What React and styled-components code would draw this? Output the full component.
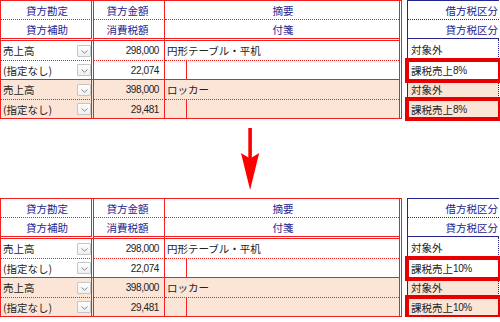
import React from 'react';
import styled, { createGlobalStyle, css } from 'styled-components';

const RED = '#f42020';
const NAVY = '#25258f';
const BEIGE = '#fbe5d6';
const FLAG = '#e80000';

const Global = createGlobalStyle`
  html, body { margin: 0; padding: 0; background: #fff; overflow: hidden; }
  body {
    font-family: "Noto Sans CJK JP", "Noto Sans", sans-serif;
    font-size: 10.5px;
    color: #222;
  }
  * { box-sizing: border-box; }
`;

const Page = styled.div`
  width: 500px;
  display: flex;
  flex-direction: column;
`;

const Section = styled.section`
  display: flex;
  align-items: flex-start;
  gap: 5px;
`;

const ArrowRow = styled.div`
  height: 79px;
  display: flex;
  justify-content: center;
`;

/* ---------- red (journal) table ---------- */

const RedTable = styled.div`
  width: 402px;
  display: grid;
  grid-template-columns: 93px 71px 1fr;
  border-top: 1px solid ${RED};
  border-left: 1px solid ${RED};
  border-bottom: 1px solid ${RED};
  border-right: 3px double ${RED};
`;

const rowKinds = {
  ha: css`height: 19px; border-bottom: 1px dotted ${RED};`,
  hb: css`height: 21px; border-bottom: 3px double ${RED};`,
  da: css`height: 20px; border-bottom: 1px dotted ${RED};`,
  db: css`height: 19px; border-bottom: 1px solid ${RED};`,
  last: css`height: 18px;`,
};

const colKinds = {
  1: css`border-right: 3px double ${RED}; padding: 0 0 0 2px;`,
  2: css`border-right: 1px solid ${RED}; padding: 0 5px 0 2px;`,
  3: css`padding: 0 0 0 2px;`,
};

const Cell = styled.div`
  display: flex;
  align-items: center;
  justify-content: ${(p) => (p.$align === 'center' ? 'center' : p.$align === 'right' ? 'flex-end' : 'space-between')};
  background: ${(p) => p.$bg || '#fff'};
  color: ${(p) => (p.$head ? NAVY : '#222')};
  white-space: nowrap;
  overflow: hidden;
  ${(p) => rowKinds[p.$row]}
  ${(p) => colKinds[p.$col]}
  ${(p) => p.$split && css`padding: 0; justify-content: flex-start; align-items: stretch;`}
`;

const Num = styled.span`
  font-family: "Liberation Sans", Arial, sans-serif;
  font-size: 10px;
  letter-spacing: -0.4px;
`;

const Picker = styled.span`
  flex: none;
  width: 14px;
  height: 12px;
  margin-right: 0;
  border: 1px solid #c6c6c6;
  border-radius: 1px;
  background: linear-gradient(#ffffff, #efefef);
  display: flex;
  align-items: flex-end;
  justify-content: center;
  padding-bottom: 2px;
`;

const Tag = styled.span`
  width: 22px;
  flex: none;
  border-right: 1px solid ${RED};
`;

/* ---------- blue (tax) table ---------- */

const BlueTable = styled.div`
  width: 92px;
  display: flex;
  flex-direction: column;
  border-top: 1px solid ${NAVY};
  border-left: 1px solid ${NAVY};
  border-bottom: 1px solid ${NAVY};
`;

const blueKinds = {
  ha: css`height: 19px; border-bottom: 1px dotted ${NAVY};`,
  hb: css`height: 19px; border-bottom: 1px solid ${NAVY};`,
  da: css`height: 22px; border-bottom: 1px dotted ${NAVY};`,
  db: css`height: 19px; border-bottom: 1px solid ${NAVY};`,
  ga: css`height: 20px; border-bottom: 1px dotted ${NAVY};`,
  last: css`height: 18px;`,
};

const TaxHead = styled.div`
  display: flex;
  align-items: center;
  justify-content: flex-end;
  padding-right: 1px;
  color: ${NAVY};
  white-space: nowrap;
  ${(p) => blueKinds[p.$row]}
`;

const TaxCell = styled.div`
  width: 91px;
  display: flex;
  align-items: center;
  padding-left: 3px;
  background: ${(p) => p.$bg || '#fff'};
  border-right: 1px dotted ${NAVY};
  white-space: nowrap;
  ${(p) => blueKinds[p.$row]}
  ${(p) =>
    p.$flag &&
    css`
      position: relative;
      z-index: 1;
      outline: 4px solid ${FLAG};
      outline-offset: -1px;
    `}
`;

/* ---------- parts ---------- */

const Chevron = () => (
  <svg width="7" height="4" viewBox="0 0 7 4">
    <path d="M0.5 0.5 L3.5 3.2 L6.5 0.5" stroke="#8a8a8a" strokeWidth="1" fill="none" />
  </svg>
);

const DownArrow = () => (
  <svg width="20" height="79" viewBox="0 0 20 79">
    <rect x="8.3" y="9" width="3.6" height="32" fill="#f00" />
    <path d="M1 34 L10.1 39.5 L19.2 34 L10.1 71 Z" fill="#f00" />
  </svg>
);

const entries = [
  { acct: '売上高', sub: '(指定なし)', amt: '298,000', tax: '22,074', memo: '円形テーブル・平机', bg: '#fff' },
  { acct: '売上高', sub: '(指定なし)', amt: '398,000', tax: '29,481', memo: 'ロッカー', bg: BEIGE },
];

function Journal() {
  return (
    <RedTable>
      <Cell $row="ha" $col={1} $align="center" $head>貸方勘定</Cell>
      <Cell $row="ha" $col={2} $align="center" $head>貸方金額</Cell>
      <Cell $row="ha" $col={3} $align="center" $head>摘要</Cell>
      <Cell $row="hb" $col={1} $align="center" $head>貸方補助</Cell>
      <Cell $row="hb" $col={2} $align="center" $head>消費税額</Cell>
      <Cell $row="hb" $col={3} $align="center" $head>付箋</Cell>
      {entries.map((e, i) => {
        const last = i === entries.length - 1;
        return (
          <React.Fragment key={i}>
            <Cell $row="da" $col={1} $bg={e.bg}>
              <span>{e.acct}</span>
              <Picker><Chevron /></Picker>
            </Cell>
            <Cell $row="da" $col={2} $align="right" $bg={e.bg}><Num>{e.amt}</Num></Cell>
            <Cell $row="da" $col={3} $bg={e.bg}>{e.memo}</Cell>
            <Cell $row={last ? 'last' : 'db'} $col={1} $bg={e.bg}>
              <span>{e.sub}</span>
              <Picker><Chevron /></Picker>
            </Cell>
            <Cell $row={last ? 'last' : 'db'} $col={2} $align="right" $bg={e.bg}><Num>{e.tax}</Num></Cell>
            <Cell $row={last ? 'last' : 'db'} $col={3} $bg={e.bg} $split><Tag /></Cell>
          </React.Fragment>
        );
      })}
    </RedTable>
  );
}

function TaxColumn({ rate }) {
  return (
    <BlueTable>
      <TaxHead $row="ha">借方税区分</TaxHead>
      <TaxHead $row="hb">貸方税区分</TaxHead>
      <TaxCell $row="da">対象外</TaxCell>
      <TaxCell $row="db" $flag>課税売上<Num>{rate}%</Num></TaxCell>
      <TaxCell $row="ga" $bg={BEIGE}>対象外</TaxCell>
      <TaxCell $row="last" $bg={BEIGE} $flag>課税売上<Num>{rate}%</Num></TaxCell>
    </BlueTable>
  );
}

function Comparison({ rate }) {
  return (
    <Section>
      <Journal />
      <TaxColumn rate={rate} />
    </Section>
  );
}

export default function App() {
  return (
    <>
      <Global />
      <Page>
        <Comparison rate="8" />
        <ArrowRow><DownArrow /></ArrowRow>
        <Comparison rate="10" />
      </Page>
    </>
  );
}
